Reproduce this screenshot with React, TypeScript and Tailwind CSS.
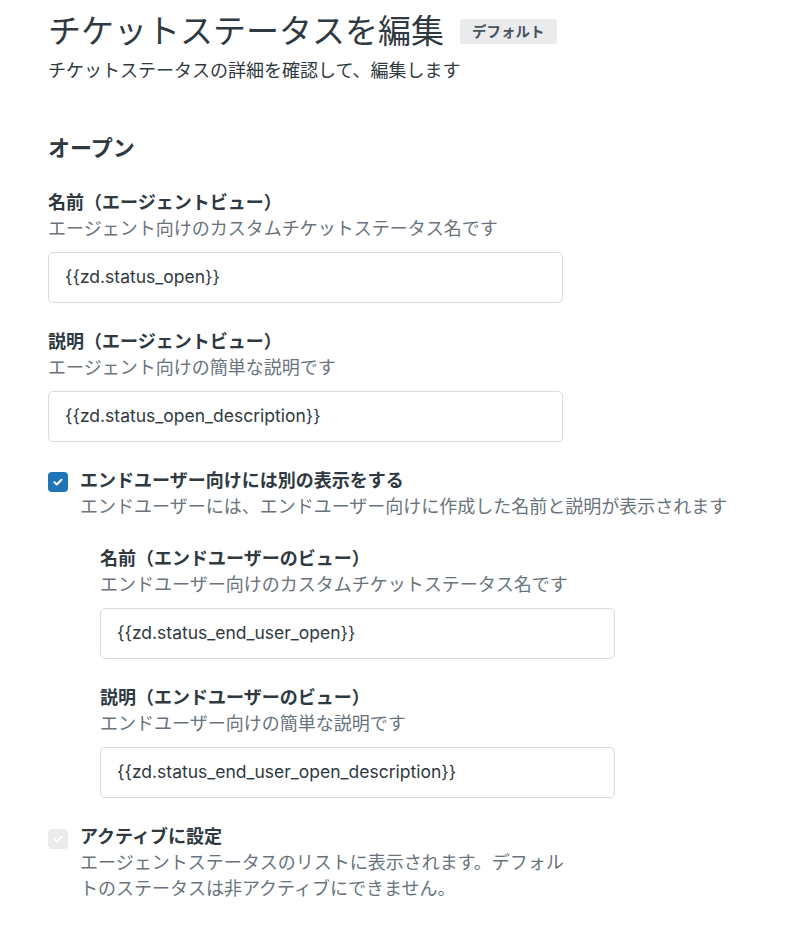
const font = { fontFamily: 'Inter, "Noto Sans CJK JP", sans-serif' }

interface FieldProps {
  label: string
  hint: string
  value: string
  first?: boolean
}

function Field({ label, hint, value, first }: FieldProps) {
  return (
    <div className={first ? 'mt-[27px]' : 'mt-[26px]'}>
      <div className="text-[18px] leading-[26px] font-bold text-[#2f3941]">{label}</div>
      <div className="text-[18px] leading-[26px] text-[#68737d]">{hint}</div>
      <div className="mt-[10px] w-[515px] h-[51px] flex items-center px-[16px] border border-[#d8dcde] rounded-[5px] bg-white text-[17.5px] text-[#2f3941]">
        {value}
      </div>
    </div>
  )
}

function Check({ disabled }: { disabled?: boolean }) {
  return (
    <div
      className={
        'shrink-0 w-[20px] h-[20px] rounded-[4px] flex items-center justify-center ' +
        (disabled ? 'bg-[#e9ebed]' : 'bg-[#1f73b7]')
      }
    >
      <svg width="12" height="12" viewBox="0 0 12 12" fill="none">
        <path d="M2.5 6.3l2.3 2.2 4.7-4.8" stroke="white" strokeWidth="2" strokeLinecap="round" strokeLinejoin="round" />
      </svg>
    </div>
  )
}

export default function App() {
  return (
    <div className="min-h-screen bg-white px-[48px] pt-[11px] pb-10" style={font}>
      <div className="flex items-center gap-[16px]">
        <h1 className="text-[33px] leading-[40px] text-[#2f3941]">チケットステータスを編集</h1>
        <span className="mt-[1px] h-[25px] px-[12px] flex items-center rounded-[3px] bg-[#e9ebed] text-[14.5px] font-bold text-[#49545c]">
          デフォルト
        </span>
      </div>
      <p className="mt-[7px] text-[18px] leading-[26px] text-[#2f3941]">チケットステータスの詳細を確認して、編集します</p>

      <h2 className="mt-[49px] text-[22px] leading-[30px] font-bold text-[#2f3941]">オープン</h2>

      <Field first label="名前（エージェントビュー）" hint="エージェント向けのカスタムチケットステータス名です" value="{{zd.status_open}}" />
      <Field label="説明（エージェントビュー）" hint="エージェント向けの簡単な説明です" value="{{zd.status_open_description}}" />

      <div className="mt-[26px] flex items-start gap-[12px]">
        <div className="mt-[4px]">
          <Check />
        </div>
        <div>
          <div className="text-[18px] leading-[26px] font-bold text-[#2f3941]">エンドユーザー向けには別の表示をする</div>
          <div className="text-[18px] leading-[26px] text-[#68737d]">
            エンドユーザーには、エンドユーザー向けに作成した名前と説明が表示されます
          </div>
        </div>
      </div>

      <div className="pl-[52px]">
        <Field label="名前（エンドユーザーのビュー）" hint="エンドユーザー向けのカスタムチケットステータス名です" value="{{zd.status_end_user_open}}" />
        <Field label="説明（エンドユーザーのビュー）" hint="エンドユーザー向けの簡単な説明です" value="{{zd.status_end_user_open_description}}" />
      </div>

      <div className="mt-[26px] flex items-start gap-[12px]">
        <div className="mt-[5px]">
          <Check disabled />
        </div>
        <div className="max-w-[492px]">
          <div className="text-[18px] leading-[26px] font-bold text-[#2f3941]">アクティブに設定</div>
          <div className="text-[18px] leading-[26px] text-[#68737d]">
            エージェントステータスのリストに表示されます。デフォルトのステータスは非アクティブにできません。
          </div>
        </div>
      </div>
    </div>
  )
}
